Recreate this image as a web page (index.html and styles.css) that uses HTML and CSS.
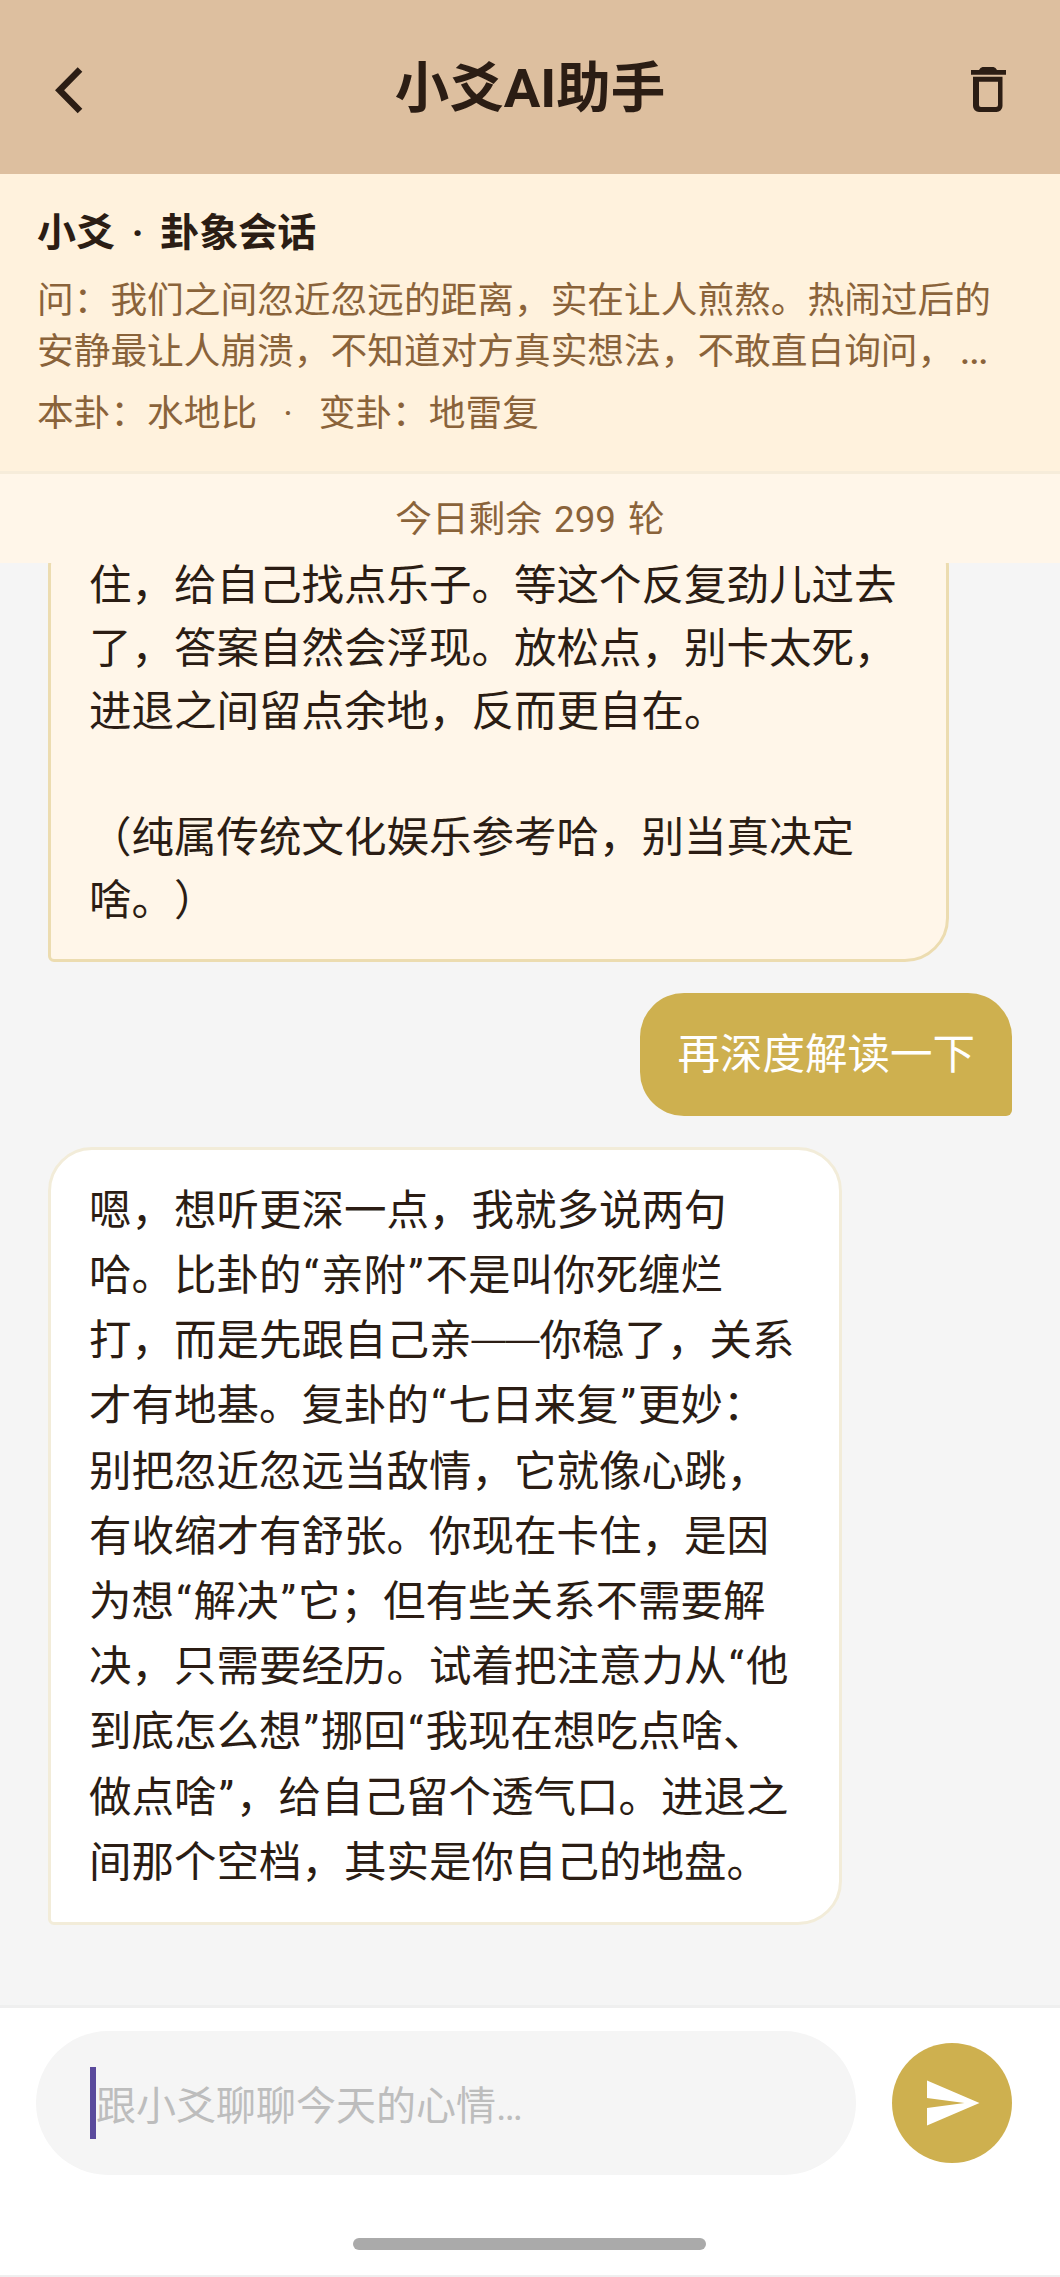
FILE: index.html
```html
<!DOCTYPE html>
<html lang="zh-CN">
<head>
<meta charset="utf-8">
<title>小爻AI助手</title>
<link rel="stylesheet" href="styles.css">
</head>
<body>
<div class="app">
  <header class="topbar">
    <button class="icon-btn" aria-label="返回">
      <svg class="icon-back" viewBox="0 0 30 50"><path d="M26 4.500 L5.600 25.200 L26 46" /></svg>
    </button>
    <h1 class="title">小爻AI助手</h1>
    <button class="icon-btn icon-btn-end" aria-label="删除">
      <svg class="icon-trash" viewBox="0 0 35 46"><path class="fill" d="M0 3h8l1.500-2 2-1h11l2 1 1.500 2h9v4.700H0z"/><path class="fill" fill-rule="evenodd" d="M2 9.700h29.500V39a6 6 0 0 1-6 6H8a6 6 0 0 1-6-6zM8 14.700V38a2 2 0 0 0 2 2h15a2 2 0 0 0 2-2V14.700z"/></svg>
    </button>
  </header>
  <section class="info">
    <div class="info-title">小爻 · 卦象会话</div>
    <div class="info-q">问：我们之间忽近忽远的距离，实在让人煎熬。热闹过后的<br>安静最让人崩溃，不知道对方真实想法，不敢直白询问，<span class="ell">…</span></div>
    <div class="info-gua"><span>本卦：水地比</span><span class="dot">·</span><span>变卦：地雷复</span></div>
  </section>
  <div class="quota">今日剩余 299 轮</div>
  <main class="chat">
    <div class="bubble bubble-first">住，给自己找点乐子。等这个反复劲儿过去<br>了，答案自然会浮现。放松点，别卡太死，<br>进退之间留点余地，反而更自在。<br><br>（纯属传统文化娱乐参考哈，别当真决定<br>啥。）</div>
    <div class="bubble bubble-user">再深度解读一下</div>
    <div class="bubble bubble-ai">嗯，想听更深一点，我就多说两句<br>哈。比卦的<span class="q">“</span>亲附<span class="q">”</span>不是叫你死缠烂<br>打，而是先跟自己亲<span class="dash">——</span>你稳了，关系<br>才有地基。复卦的<span class="q">“</span>七日来复<span class="q">”</span>更妙：<br>别把忽近忽远当敌情，它就像心跳，<br>有收缩才有舒张。你现在卡住，是因<br>为想<span class="q">“</span>解决<span class="q">”</span>它；但有些关系不需要解<br>决，只需要经历。试着把注意力从<span class="q">“</span>他<br>到底怎么想<span class="q">”</span>挪回<span class="q">“</span>我现在想吃点啥、<br>做点啥<span class="q">”</span>，给自己留个透气口。进退之<br>间那个空档，其实是你自己的地盘。</div>
  </main>
  <footer class="composer">
    <div class="input-row">
      <div class="input"><span class="caret"></span><span class="placeholder">跟小爻聊聊今天的心情…</span></div>
      <button class="send" aria-label="发送">
        <svg viewBox="0 0 24 24"><path d="M2.010 21 23 12 2.010 3 2 10l15 2-15 2z"/></svg>
      </button>
    </div>
    <div class="home-wrap"><div class="home"></div></div>
  </footer>
</div>
</body>
</html>
```
FILE: styles.css
```css
* { box-sizing: border-box; }
html, body { margin: 0; padding: 0; }
body { font-family: Roboto, "Noto Sans CJK SC", sans-serif; color: #2b1d14; background: #f5f5f5; text-spacing-trim: space-all; }
.app { width: 1060px; height: 2277px; display: flex; flex-direction: column; overflow: hidden; }

.topbar { height: 174px; flex: none; background: #ddbf9f; display: grid; grid-template-columns: 1fr auto 1fr; align-items: center; padding: 6px 54px 0; }
.icon-btn { border: 0; padding: 0; background: none; display: flex; }
.icon-btn-end { justify-self: end; }
.icon-back { width: 30px; height: 50px; }
.icon-back path { fill: none; stroke: #2b1d14; stroke-width: 6.500; }
.icon-trash { width: 35px; height: 46px; }
.fill { fill: #2b1d14; }
.title { margin: 0 0 4px; font-size: 54.500px; font-weight: 700; line-height: 1; color: #2b1d14; }

.info { flex: none; height: 300px; background: #fff2dd; border-bottom: 3px solid #f6ecda; padding: 31px 37px 0; }
.info-title { font-size: 39px; font-weight: 700; line-height: 56px; color: #2b1d14; word-spacing: 7px; }
.info-q { font-size: 36.700px; line-height: 51px; color: #8a633a; margin-top: 14px; white-space: nowrap; }
.ell { font-size: 44px; margin-left: 5px; line-height: 1; }
.info-gua { font-size: 36.700px; line-height: 52px; color: #8a633a; margin-top: 11px; display: flex; gap: 26px; }

.quota { flex: none; height: 89px; background: #fff6e9; color: #8a633a; font-size: 36.700px; word-spacing: 3px; padding-bottom: 6px; display: flex; align-items: center; justify-content: center; }

.chat { flex: 1; min-height: 0; overflow: hidden; background: #f5f5f5; display: flex; flex-direction: column; justify-content: flex-end; align-items: flex-start; padding: 0 48px 80px; gap: 31px; }
.bubble { flex: none; font-size: 42.500px; line-height: 65.200px; padding: 28px 38px 27px; border-radius: 44px; white-space: nowrap; }
.q { margin: 0 2.200px; }
.dash { font-family: "Liberation Sans", sans-serif; font-size: 34px; vertical-align: 5px; line-height: 1; }
.bubble-first { width: 901px; line-height: 63px; background: #fff6e9; border: 3px solid #ecdcb0; border-bottom-left-radius: 6px; }
.bubble-user { align-self: flex-end; background: #ceb04f; color: #fff; padding: 29px 37px; border-bottom-right-radius: 6px; }
.bubble-ai { width: 794px; background: #fff; border: 3px solid #f2ecd9; border-bottom-left-radius: 6px; }

.composer { flex: none; height: 272px; background: #fff; border-top: 3px solid #efefef; border-bottom: 2px solid #efefef; display: flex; flex-direction: column; }
.input-row { display: flex; align-items: center; gap: 36px; padding: 23px 48px 0 36px; }
.input { flex: 1; height: 144px; border-radius: 72px; background: #f5f5f5; display: flex; align-items: center; padding-left: 54px; }
.caret { width: 6px; height: 72px; background: #5a4a9c; flex: none; }
.placeholder { font-size: 40px; color: #bdbdbd; }
.send { width: 120px; height: 120px; border: 0; padding: 0; border-radius: 50%; background: #ceb04f; display: flex; align-items: center; justify-content: center; }
.send svg { width: 60px; height: 60px; fill: #fff; }
.home-wrap { flex: 1; display: flex; justify-content: center; padding-top: 63px; padding-right: 1px; }
.home { width: 353px; height: 12px; border-radius: 6px; background: #aaaaaa; }
```
